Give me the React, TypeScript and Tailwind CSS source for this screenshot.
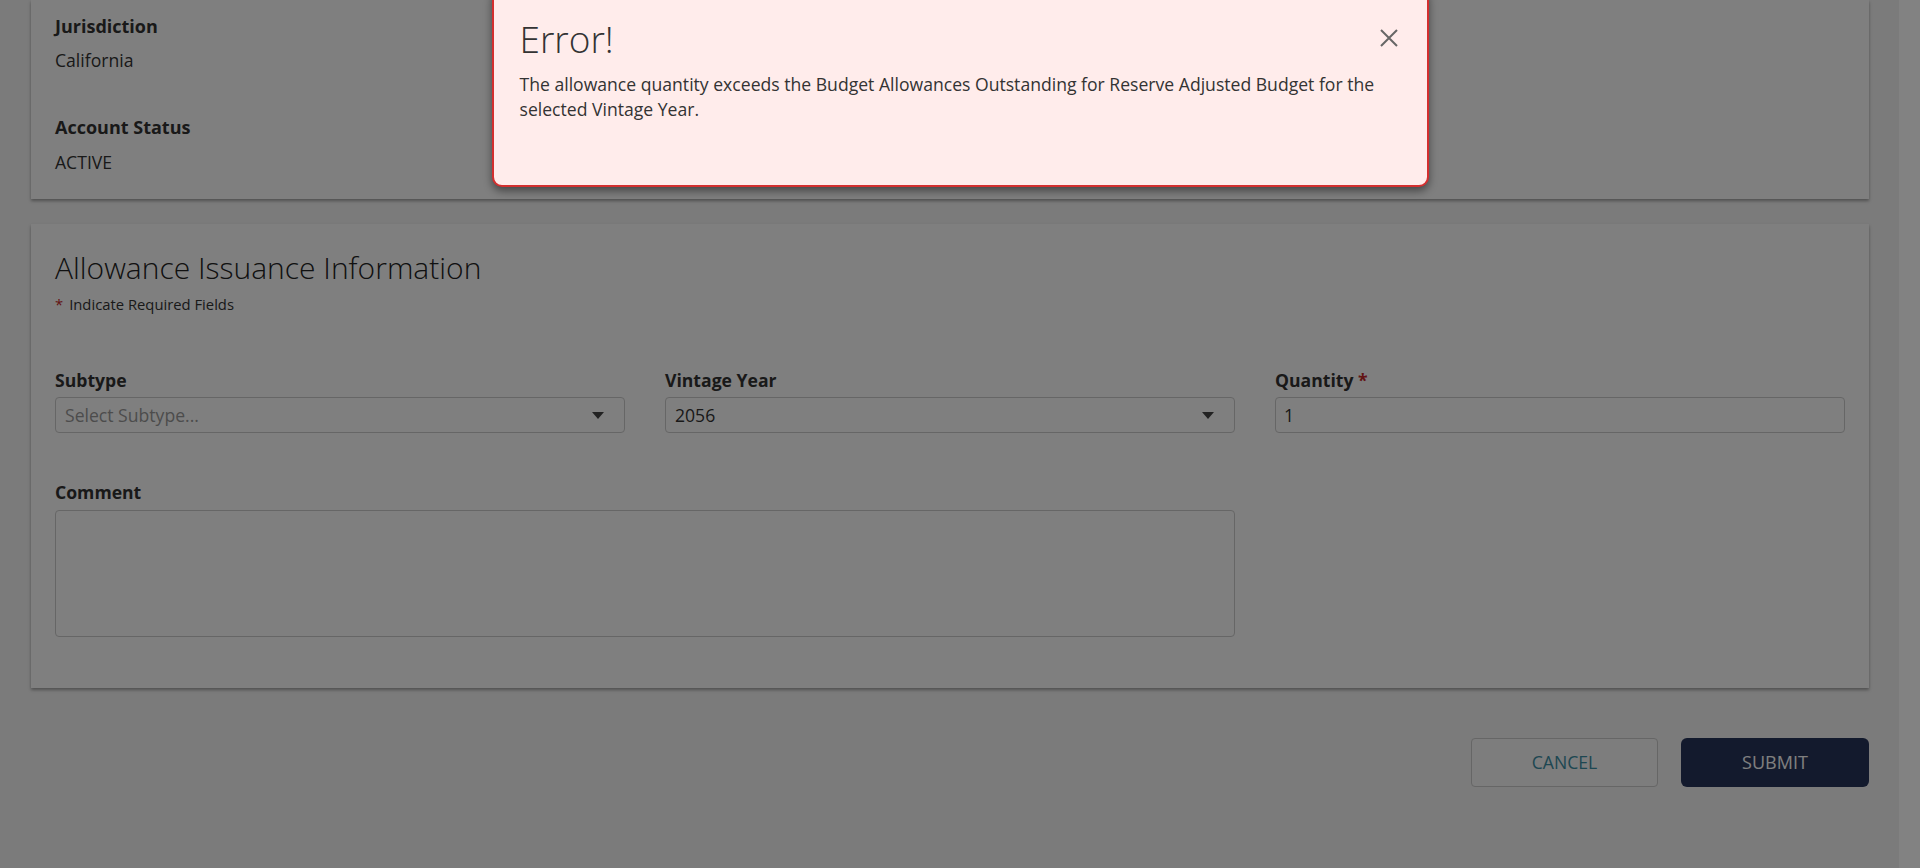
import React from "react"

// Allowance issuance form, shown behind an error dialog.
function Caret() {
  return (
    <svg width="12" height="7" viewBox="0 0 12 7" className="shrink-0">
      <path d="M0 0 L12 0 L6 7 Z" fill="#444" />
    </svg>
  )
}

function Field({ label, required, children }: { label: string; required?: boolean; children: React.ReactNode }) {
  return (
    <div className="flex flex-col">
      <label className="text-[17.6px] leading-6 font-bold text-[#333]">
        {label}
        {required && <span className="text-[#c62828]"> *</span>}
      </label>
      <div className="mt-[5px]">{children}</div>
    </div>
  )
}

function SelectBox({ value, placeholder }: { value?: string; placeholder?: string }) {
  return (
    <div className="h-9 rounded border border-[#cccccc] bg-white flex items-center justify-between pl-[9px] pr-5">
      <span className={value ? "text-[17.6px] text-[#333]" : "text-[17.6px] text-[#999]"}>
        {value ?? placeholder}
      </span>
      <Caret />
    </div>
  )
}

export default function App() {
  return (
    <div
      className="relative flex h-[868px] w-full overflow-hidden bg-[#f6f6f6]"
      style={{ fontFamily: '"Open Sans", "Liberation Sans", sans-serif' }}
    >
      <div className="flex-1 flex flex-col pl-[31px] pr-[30px]">
        {/* Account card (scrolled, top hidden) */}
        <div className="bg-white shadow-[0_2px_3px_rgba(0,0,0,0.35)] pl-6 pt-[14px] pb-[25px]">
          <div className="text-[18px] leading-6 font-bold text-[#333]">Jurisdiction</div>
          <div className="mt-[10px] text-[17.6px] leading-6 text-[#333]">California</div>
          <div className="mt-[43px] text-[18px] leading-6 font-bold text-[#333]">Account Status</div>
          <div className="mt-[11px] text-[17.6px] leading-6 text-[#333]">ACTIVE</div>
        </div>

        {/* Issuance form */}
        <div className="mt-[25px] bg-white shadow-[0_2px_3px_rgba(0,0,0,0.35)] px-6 pt-[26px] pb-[51px]">
          <h2 className="text-[30px] leading-9 font-light text-[#222]">Allowance Issuance Information</h2>
          <p className="mt-[9px] text-[14.8px] leading-[18px] text-[#333]">
            <span className="mr-[6px] text-[#c62828]">*</span>Indicate Required Fields
          </p>

          <div className="mt-[55px] grid grid-cols-3 gap-x-10">
            <Field label="Subtype">
              <SelectBox placeholder="Select Subtype..." />
            </Field>
            <Field label="Vintage Year">
              <SelectBox value="2056" />
            </Field>
            <Field label="Quantity" required>
              <div className="h-9 rounded border border-[#cccccc] bg-white flex items-center pl-2 text-[17.6px] text-[#333]">
                1
              </div>
            </Field>
          </div>

          <div className="mt-[47px] grid grid-cols-3 gap-x-10">
            <div className="col-span-2 flex flex-col">
              <label className="text-[17.6px] leading-6 font-bold text-[#333]">Comment</label>
              <div className="mt-[6px] h-[127px] rounded border border-[#cccccc] bg-white" />
            </div>
          </div>
        </div>

        <div className="mt-[50px] flex justify-end gap-[23px]">
          <button className="h-[49px] w-[187px] rounded border border-[#cccccc] bg-[#fafafa] text-[17.6px] text-[#3a8ea4]">
            CANCEL
          </button>
          <button className="h-[49px] w-[188px] rounded-md bg-[#26345a] text-[18px] text-white">
            SUBMIT
          </button>
        </div>
      </div>

      {/* backdrop */}
      <div className="absolute inset-0 bg-black/50" />

      {/* scrollbar track */}
      <div className="relative w-[21px] shrink-0 bg-[#828282]" />

      {/* error dialog */}
      <div className="absolute inset-x-0 top-0 flex justify-center">
        <div className="relative mt-[-13px] h-[200px] w-[937px] rounded-[10px] border-2 border-[#d32f2f] bg-[#ffeceb] pl-[26px] pr-[50px] pt-[28px] shadow-[0_4px_8px_rgba(0,0,0,0.45)]">
          <h3 className="text-[37px] leading-[43px] font-light text-[#333]">Error!</h3>
          <p className="mt-[12px] text-[17.6px] leading-[25px] text-[#333]">
            The allowance quantity exceeds the Budget Allowances Outstanding for Reserve Adjusted Budget for the
            selected Vintage Year.
          </p>
          <button className="absolute right-[29px] top-[40px] h-[18px] w-[18px]" aria-label="Close">
            <svg width="18" height="18" viewBox="0 0 18 18">
              <path d="M1 1 L17 17 M17 1 L1 17" stroke="#666" strokeWidth="2" />
            </svg>
          </button>
        </div>
      </div>
    </div>
  )
}
